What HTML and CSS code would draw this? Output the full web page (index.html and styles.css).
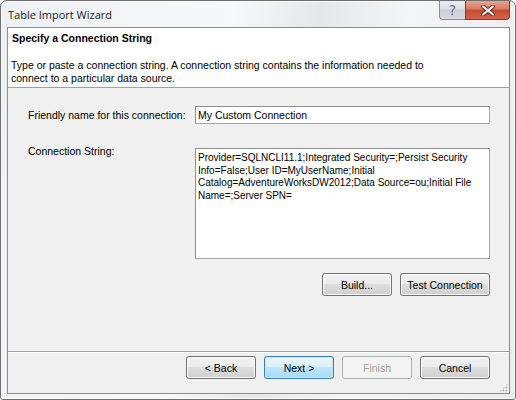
FILE: index.html
```html
<!DOCTYPE html>
<html lang="en">
<head>
    <meta charset="UTF-8">
    <title>Table Import Wizard</title>
    <link rel="stylesheet" href="styles.css">
</head>
<body>
    <div class="window">
        <!-- 标题栏 -->
        <div class="titlebar">
            <span class="caption">Table Import Wizard</span>
            <div class="caption-btns">
                <span class="cap-btn help">?</span>
                <span class="cap-btn close">
                    <svg width="14" height="11" viewBox="0 0 14 11">
                        <path d="M2 1.5 L12 9.5 M12 1.5 L2 9.5" stroke="#5a2a22" stroke-width="4" stroke-linecap="round"/>
                        <path d="M2 1.5 L12 9.5 M12 1.5 L2 9.5" stroke="#fff" stroke-width="2.2" stroke-linecap="round"/>
                    </svg>
                </span>
            </div>
        </div>

        <div class="client">
            <div class="header">
                <div class="header-title">Specify a Connection String</div>
                <div class="header-desc">Type or paste a connection string. A connection string contains the information needed to<br>connect to a particular data source.</div>
            </div>

            <div class="body">
                <div class="row">
                    <label class="label" for="name">Friendly name for this connection:</label>
                    <div class="field" id="name">My Custom Connection</div>
                </div>
                <div class="row row-top">
                    <label class="label">Connection String:</label>
                    <div class="field area">Provider=SQLNCLI11.1;Integrated Security=;Persist Security<br>Info=False;User ID=MyUserName;Initial<br>Catalog=AdventureWorksDW2012;Data Source=ou;Initial File<br>Name=;Server SPN=</div>
                </div>
                <div class="actions">
                    <button class="btn btn-build">Build...</button>
                    <button class="btn btn-test">Test Connection</button>
                </div>
            </div>

            <div class="footer">
                <button class="btn">&lt; Back</button>
                <button class="btn btn-default">Next &gt;</button>
                <button class="btn" disabled>Finish</button>
                <button class="btn">Cancel</button>
                <span class="grip"></span>
            </div>
        </div>
    </div>
</body>
</html>
```

FILE: styles.css
```css
* {
    margin: 0;
    padding: 0;
    box-sizing: border-box;
}

body {
    width: 516px;
    height: 400px;
    font-family: "Liberation Sans", Arial, sans-serif;
    font-size: 10.5px;
    color: #000;
    background: #fff;
}

/* 窗口外框 (win7 浅色玻璃) */
.window {
    width: 516px;
    height: 400px;
    border: 1px solid #6e6e6e;
    border-radius: 7px 7px 3px 3px;
    padding: 0 5px 5px 6px;
    display: flex;
    flex-direction: column;
    background: linear-gradient(100deg, #eef1f4 0%, #f7f8fa 40%, #e4e7ea 55%, #f4f5f7 70%, #e9ecef 100%);
    box-shadow: inset 0 0 0 1px #fafafa;
}

.titlebar {
    height: 26px;
    display: flex;
    align-items: flex-start;
    justify-content: space-between;
}

.caption {
    font-family: "Open Sans", "Noto Sans", sans-serif;
    font-size: 11px;
    margin-top: 6px;
    padding-left: 1px;
    color: #1a1a1a;
}

.caption-btns {
    display: flex;
}

.cap-btn {
    height: 19px;
    display: flex;
    align-items: center;
    justify-content: center;
    border: 1px solid #8a8f96;
    border-top: 0;
}

.help {
    width: 26px;
    border-right: 0;
    border-radius: 0 0 0 4px;
    font-family: "DejaVu Sans", sans-serif;
    font-size: 14px;
    color: #66707a;
    background: linear-gradient(#e8ebef 0%, #dce0e5 45%, #c9ced5 50%, #d7dbe0 100%);
}

.close {
    width: 45px;
    border-color: #7d3a2e;
    border-radius: 0 0 4px 0;
    background: linear-gradient(#e8a393 0%, #d77a63 45%, #c44a2e 50%, #d2664b 100%);
}

/* 客户区 */
.client {
    flex: 1;
    border: 1px solid #8c8c8c;
    background: #f0f0f0;
    display: flex;
    flex-direction: column;
}

.header {
    height: 60px;
    background: #fff;
    border-bottom: 1px solid #a0a0a0;
    padding: 3px 4px 0 3px;
}

.header-title {
    font-weight: bold;
    font-size: 10.5px;
    padding-left: 1px;
    line-height: 14px;
}

.header-desc {
    margin-top: 14px;
    line-height: 13px;
}

.body {
    flex: 1;
    padding: 18px 19px 0 20px;
}

.row {
    display: flex;
    align-items: center;
}

.row-top {
    align-items: flex-start;
    margin-top: 24px;
}

.label {
    width: 167px;
}

.row-top .label {
    margin-top: -3px;
}

.field {
    flex: 1;
    height: 18px;
    background: #fff;
    border: 1px solid #a5a5a5;
    border-top-color: #8e8e8e;
    border-left-color: #8e8e8e;
    padding: 2px 2px;
    line-height: 12px;
}

.area {
    height: 111px;
    padding: 3px 2px;
    font-size: 10px;
    line-height: 12.5px;
    white-space: nowrap;
}

.actions {
    display: flex;
    justify-content: flex-end;
    gap: 8px;
    margin-top: 14px;
}

/* 按钮 */
.btn {
    height: 23px;
    font-family: "Liberation Sans", Arial, sans-serif;
    font-size: 10.5px;
    color: #000;
    border: 1px solid #707070;
    border-radius: 3px;
    background: linear-gradient(#f2f2f2 0%, #ebebeb 49%, #dddddd 50%, #cfcfcf 100%);
    box-shadow: inset 0 0 0 1px #fcfcfc;
    width: 70px;
}

.btn-test {
    width: 90px;
}

.btn-default {
    border-color: #3c7fb1;
    background: linear-gradient(#eaf6fd 0%, #d9f0fc 49%, #bee6fd 50%, #a7d9f5 100%);
    box-shadow: inset 0 0 0 1px #c3e5f7;
}

.btn:disabled {
    color: #a0a0a0;
    border-color: #adb2b5;
    background: #f4f4f4;
    box-shadow: none;
}

.footer {
    height: 42px;
    border-top: 1px solid #a0a0a0;
    box-shadow: inset 0 1px 0 #fff;
    display: flex;
    justify-content: flex-end;
    align-items: flex-start;
    gap: 8px;
    padding: 4px 19px 0 0;
    position: relative;
}

/* 右下角拖拽点 */
.grip {
    position: absolute;
    right: 1px;
    bottom: 1px;
    width: 9px;
    height: 9px;
    background: radial-gradient(circle, #b5b5b5 0.8px, transparent 1.2px) 0 0 / 3px 3px;
    clip-path: polygon(100% 0, 100% 100%, 0 100%);
}
```
